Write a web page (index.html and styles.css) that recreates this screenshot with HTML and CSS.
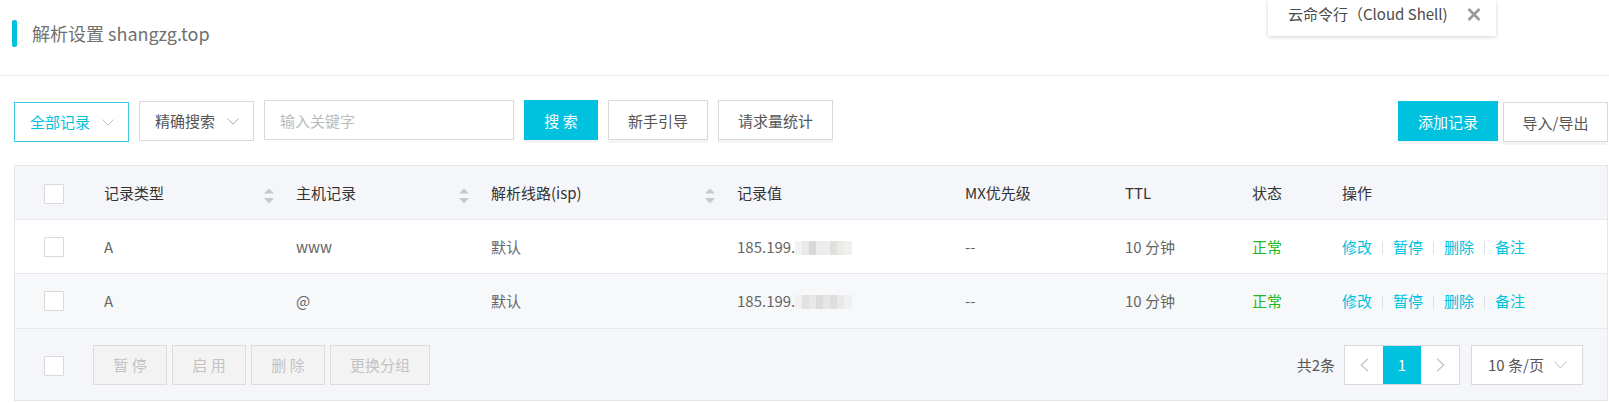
FILE: index.html
```html
<!DOCTYPE html>
<html lang="zh-CN">
<head>
<meta charset="utf-8">
<title>解析设置</title>
<link rel="stylesheet" href="styles.css">
</head>
<body>
<header class="page-header">
  <div class="title"><span class="title-bar"></span><h1>解析设置 shangzg.top</h1></div>
</header>

<div class="cloudshell">
  <span class="cs-text">云命令行（Cloud Shell)</span>
  <svg class="cs-close" width="14" height="13" viewBox="0 0 14 13"><path d="M1.5 1 L12.5 12 M12.5 1 L1.5 12" stroke="#9a9a9a" stroke-width="2.6" fill="none"/></svg>
</div>

<main class="content">
  <div class="toolbar">
    <div class="tool-left">
      <div class="select select-active"><span>全部记录</span><svg class="chev" width="12" height="7" viewBox="0 0 12 7"><polyline points="0.5,0.5 6,6.2 11.5,0.5" fill="none" stroke="#bfbfbf" stroke-width="1"/></svg></div>
      <div class="select select-2"><span>精确搜索</span><svg class="chev" width="12" height="7" viewBox="0 0 12 7"><polyline points="0.5,0.5 6,6.2 11.5,0.5" fill="none" stroke="#a8a8a8" stroke-width="1"/></svg></div>
      <div class="input">输入关键字</div>
      <button class="btn btn-primary btn-search">搜 索</button>
      <button class="btn btn-guide">新手引导</button>
      <button class="btn btn-stat">请求量统计</button>
    </div>
    <div class="tool-right">
      <button class="btn btn-primary btn-add">添加记录</button>
      <button class="btn btn-io">导入/导出</button>
    </div>
  </div>

  <div class="table">
    <div class="row head">
      <div class="cell check"><span class="checkbox"></span></div>
      <div class="cell sortable"><span>记录类型</span><svg class="sort" width="10" height="16" viewBox="0 0 10 16"><path d="M5 0.5 L10 5.5 L0 5.5 Z M0 10 L10 10 L5 15.5 Z" fill="#c6c8cc"/></svg></div>
      <div class="cell sortable"><span>主机记录</span><svg class="sort" width="10" height="16" viewBox="0 0 10 16"><path d="M5 0.5 L10 5.5 L0 5.5 Z M0 10 L10 10 L5 15.5 Z" fill="#c6c8cc"/></svg></div>
      <div class="cell sortable"><span>解析线路(isp)</span><svg class="sort" width="10" height="16" viewBox="0 0 10 16"><path d="M5 0.5 L10 5.5 L0 5.5 Z M0 10 L10 10 L5 15.5 Z" fill="#c6c8cc"/></svg></div>
      <div class="cell">记录值</div>
      <div class="cell">MX优先级</div>
      <div class="cell">TTL</div>
      <div class="cell">状态</div>
      <div class="cell">操作</div>
    </div>

    <div class="row">
      <div class="cell check"><span class="checkbox"></span></div>
      <div class="cell">A</div>
      <div class="cell">www</div>
      <div class="cell">默认</div>
      <div class="cell">185.199.<span class="blur blur-1"></span></div>
      <div class="cell">--</div>
      <div class="cell">10 分钟</div>
      <div class="cell status">正常</div>
      <div class="cell ops"><a>修改</a><i class="sep"></i><a>暂停</a><i class="sep"></i><a>删除</a><i class="sep"></i><a>备注</a></div>
    </div>

    <div class="row alt">
      <div class="cell check"><span class="checkbox"></span></div>
      <div class="cell">A</div>
      <div class="cell">@</div>
      <div class="cell">默认</div>
      <div class="cell">185.199.<span class="blur blur-2"></span></div>
      <div class="cell">--</div>
      <div class="cell">10 分钟</div>
      <div class="cell status">正常</div>
      <div class="cell ops"><a>修改</a><i class="sep"></i><a>暂停</a><i class="sep"></i><a>删除</a><i class="sep"></i><a>备注</a></div>
    </div>

    <div class="foot">
      <div class="foot-left">
        <span class="checkbox foot-check"></span>
        <div class="batch">
          <button class="btn-dis">暂 停</button>
          <button class="btn-dis">启 用</button>
          <button class="btn-dis">删 除</button>
          <button class="btn-dis wide">更换分组</button>
        </div>
      </div>
      <div class="foot-right">
        <span class="total">共2条</span>
        <div class="pager">
          <span class="pg"><svg width="9" height="14" viewBox="0 0 9 14"><polyline points="8,0.8 1.2,7 8,13.2" fill="none" stroke="#c4c4c4" stroke-width="1.2"/></svg></span>
          <span class="pg pg-active">1</span>
          <span class="pg"><svg width="9" height="14" viewBox="0 0 9 14"><polyline points="1,0.8 7.8,7 1,13.2" fill="none" stroke="#c4c4c4" stroke-width="1.2"/></svg></span>
        </div>
        <div class="select page-size"><span>10 条/页</span><svg class="chev" width="13" height="8" viewBox="0 0 13 8"><polyline points="0.5,0.5 6.5,7 12.5,0.5" fill="none" stroke="#bdbdbd" stroke-width="1"/></svg></div>
      </div>
    </div>
  </div>
</main>
</body>
</html>
```

FILE: styles.css
```css
* { box-sizing: border-box; }

body {
  margin: 0;
  font-family: "Noto Sans CJK SC", "Noto Sans", sans-serif;
  font-size: 15px;
  color: #666;
  background: #fff;
  position: relative;
}

button {
  font-family: inherit;
  font-size: 15px;
  cursor: pointer;
}

/* header */
.page-header {
  height: 76px;
  border-bottom: 1px solid #ececec;
  padding: 20px 0 0 12px;
}
.title {
  display: flex;
  align-items: center;
  height: 27px;
}
.title-bar {
  width: 5px;
  height: 27px;
  background: #00c1de;
  border-radius: 2px;
}
.title h1 {
  margin: 0 0 0 15px;
  font-size: 18px;
  font-weight: 400;
  line-height: 27px;
  color: #707070;
}

/* cloud shell popup */
.cloudshell {
  position: absolute;
  top: 0;
  left: 1268px;
  width: 228px;
  height: 36px;
  padding: 0 15px 8px 20px;
  background: #fff;
  box-shadow: 0 1px 4px rgba(0, 0, 0, 0.18);
  display: flex;
  align-items: center;
  justify-content: space-between;
}
.cs-text {
  color: #4a4a4a;
  line-height: 20px;
}
.cs-close { display: block; }

/* toolbar */
.content {
  padding: 24px 1px 0 14px;
}
.toolbar {
  display: flex;
  justify-content: space-between;
  height: 40px;
}
.tool-left, .tool-right {
  display: flex;
  align-items: flex-start;
}
.tool-left { gap: 10px; }
.tool-right { gap: 5px; }

.select {
  width: 115px;
  height: 40px;
  border: 1px solid #d9d9d9;
  background: #fff;
  display: flex;
  align-items: center;
  justify-content: space-between;
  padding: 0 14px 0 15px;
  color: #555;
  line-height: 20px;
}
.select .chev { display: block; }
.select-active {
  border-color: #3ccbe3;
  color: #00c1de;
  margin-top: 2px;
}
.select-2 { margin-top: 1px; }

.input {
  width: 250px;
  height: 40px;
  border: 1px solid #d9d9d9;
  padding: 0 15px;
  display: flex;
  align-items: center;
  color: #bbb;
}

.btn {
  height: 40px;
  border: 1px solid #d9d9d9;
  background: #fff;
  color: #555;
  padding: 0;
  box-shadow: 0 3px 0 #f4f4f4;
}
.btn-primary {
  background: #00c1de;
  border-color: #00c1de;
  color: #fff;
}
.btn-search { width: 74px; }
.btn-guide { width: 100px; }
.btn-stat { width: 115px; }
.btn-add { width: 100px; margin-top: 1px; }
.btn-io { width: 105px; margin-top: 2px; }

/* table */
.table {
  margin-top: 25px;
  border: 1px solid #e3e6eb;
}
.row {
  display: grid;
  grid-template-columns: 69px 192px 195px 246px 228px 160px 127px 90px 1fr;
  align-items: center;
  height: 54px;
  border-bottom: 1px solid #e6e8ec;
  background: #fff;
  line-height: 20px;
}
.row.head {
  background: #f5f6fa;
  color: #333;
}
.row.alt {
  height: 55px;
  background: #f7f8fa;
}
.cell {
  padding-left: 20px;
  white-space: nowrap;
}
.cell.check {
  padding-left: 29px;
  display: flex;
  align-items: center;
}
.cell.sortable {
  display: flex;
  align-items: center;
  justify-content: space-between;
  padding-right: 2px;
}
.sort {
  display: block;
  margin-top: 6px;
}

.checkbox {
  display: inline-block;
  width: 20px;
  height: 20px;
  border: 1px solid #d9d9d9;
  background: #fff;
  border-radius: 1px;
}
.head .checkbox { margin-top: 2px; }

.blur {
  display: inline-block;
  width: 57px;
  height: 14px;
  vertical-align: -2px;
}
.blur-1 {
  background:
    linear-gradient(90deg, #f3f3f3 0 7px, #eaeaea 7px 14px, #d8d8d8 14px 21px, #e9ebee 21px 28px, #eeeeee 28px 35px, #e0e0e0 35px 42px, #eaede6 42px 49px, #eff1ed 49px 57px);
}
.blur-2 {
  background:
    linear-gradient(90deg, #f1f1f1 0 7px, #e2e2e2 7px 14px, #e8e8e8 14px 21px, #dcdcdc 21px 28px, #e6e6e6 28px 35px, #dedede 35px 42px, #e9e9eb 42px 49px, #eef0f2 49px 57px);
}

.status { color: #22b722; }

.ops {
  display: flex;
  align-items: center;
}
.ops a {
  color: #00c1de;
}
.ops .sep {
  display: inline-block;
  width: 1px;
  height: 13px;
  background: #dcdfe3;
  margin: 2px 10px 0;
}

/* footer */
.foot {
  height: 71px;
  background: #f5f6fa;
  display: flex;
  align-items: center;
  justify-content: space-between;
  padding: 0 24px 0 29px;
}
.foot-left {
  display: flex;
  align-items: center;
}
.foot-check { margin-top: 3px; }
.batch {
  display: flex;
  gap: 5px;
  margin-left: 29px;
}
.btn-dis {
  width: 74px;
  height: 40px;
  border: 1px solid #dcdcdc;
  background: #f3f3f3;
  color: #c3c3c3;
  padding: 0;
  cursor: not-allowed;
}
.btn-dis.wide { width: 100px; }

.foot-right {
  display: flex;
  align-items: center;
}
.total {
  color: #555;
  margin-right: 9px;
  line-height: 20px;
}
.pager {
  display: flex;
  height: 40px;
  border: 1px solid #dadada;
  background: #fff;
}
.pg {
  width: 38px;
  height: 38px;
  display: flex;
  align-items: center;
  justify-content: center;
}
.pg svg { display: block; }
.pg-active {
  background: #00c1de;
  color: #fff;
}
.page-size {
  width: 112px;
  margin-left: 11px;
  padding: 0 15px 0 16px;
}
```
